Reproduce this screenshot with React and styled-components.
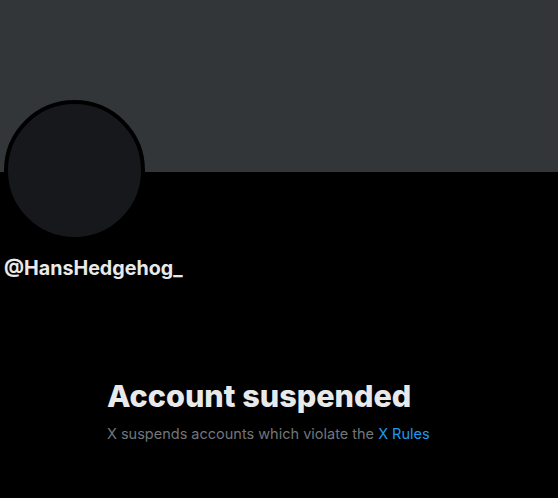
import React from 'react';
import styled, { createGlobalStyle } from 'styled-components';

const GlobalStyle = createGlobalStyle`
    html, body {
        margin: 0;
        padding: 0;
        background-color: #000000;
    }
    body {
        font-family: Inter, "Noto Sans", sans-serif;
    }
`;

const Page = styled.div`
    width: 558px;
    height: 498px;
    background-color: #000000;
    overflow: hidden;
`;

const Banner = styled.div`
    height: 172px;
    background-color: #333639;
`;

const ProfileHead = styled.div`
    padding: 0 4px;
    margin-top: -72px;
`;

const Avatar = styled.div`
    width: 133px;
    height: 133px;
    border-radius: 50%;
    border: 4px solid #000000;
    background-color: #16181c;
`;

const Handle = styled.div`
    margin-top: 15px;
    color: #e7e9ea;
    font-size: 19.7px;
    font-weight: 700;
    line-height: 24px;
`;

const EmptyState = styled.div`
    margin: 98px 0 0 107px;
    width: 340px;
`;

const Heading = styled.h1`
    margin: 0;
    color: #e7e9ea;
    font-size: 30.6px;
    font-weight: 800;
    line-height: 36px;
`;

const Note = styled.p`
    margin: 10px 0 0;
    color: #71767b;
    font-size: 14.5px;
    line-height: 20px;
`;

const RulesLink = styled.a`
    color: #1d9bf0;
    text-decoration: none;
`;

const App = () => {
    return (
        <Page>
            <GlobalStyle />
            <Banner />
            <ProfileHead>
                <Avatar />
                <Handle>@HansHedgehog_</Handle>
            </ProfileHead>
            <EmptyState>
                <Heading>Account suspended</Heading>
                <Note>
                    X suspends accounts which violate the <RulesLink href="#">X Rules</RulesLink>
                </Note>
            </EmptyState>
        </Page>
    );
}

export default App;
